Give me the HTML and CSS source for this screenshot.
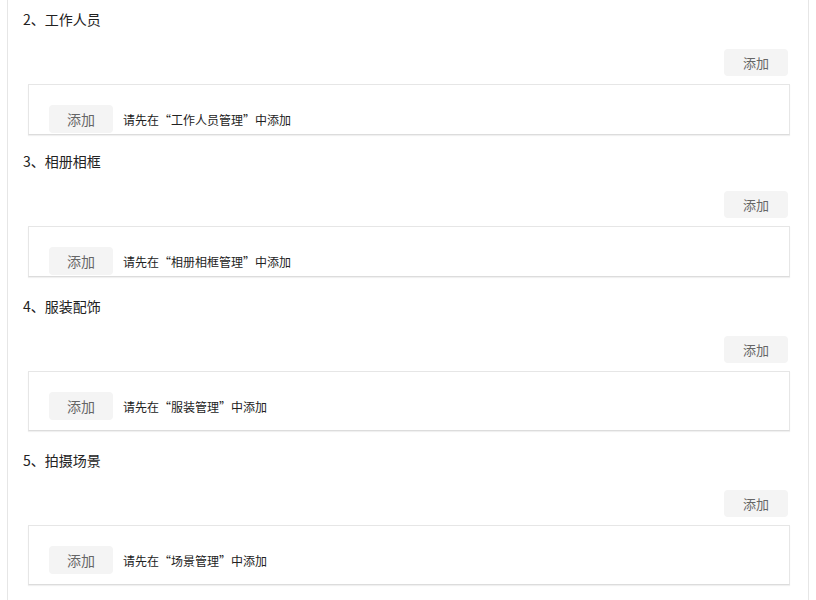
FILE: index.html
```html
<!DOCTYPE html>
<html>
<head>
    <title>资源配置</title>
<link rel="stylesheet" href="styles.css">
</head>
<body>
    <div class="panel">
        <div class="section">
            <div class="section-title">2、工作人员</div>
            <div class="section-bar"><button class="btn btn-small">添加</button></div>
            <div class="section-box">
                <button class="btn">添加</button>
                <span class="hint">请先在“工作人员管理”中添加</span>
            </div>
        </div>

        <div class="section">
            <div class="section-title">3、相册相框</div>
            <div class="section-bar"><button class="btn btn-small">添加</button></div>
            <div class="section-box">
                <button class="btn">添加</button>
                <span class="hint">请先在“相册相框管理”中添加</span>
            </div>
        </div>

        <div class="section section-loose">
            <div class="section-title">4、服装配饰</div>
            <div class="section-bar"><button class="btn btn-small">添加</button></div>
            <div class="section-box section-box-tall">
                <button class="btn">添加</button>
                <span class="hint">请先在“服装管理”中添加</span>
            </div>
        </div>

        <div class="section section-loose">
            <div class="section-title">5、拍摄场景</div>
            <div class="section-bar"><button class="btn btn-small">添加</button></div>
            <div class="section-box section-box-tall">
                <button class="btn">添加</button>
                <span class="hint">请先在“场景管理”中添加</span>
            </div>
        </div>
    </div>
</body>
</html>
```

FILE: styles.css
```css
body {
    margin: 0;
    background-color: #fff;
    font-family: "Noto Sans CJK SC", "Noto Sans", sans-serif;
    color: #333;
}

.panel {
    width: 800px;
    min-height: 600px;
    margin-left: 7px;
    border-left: 1px solid #e6e6e6;
    border-right: 1px solid #e6e6e6;
}

.section {
    padding-top: 16px;
}

.section:first-child {
    padding-top: 9px;
}

.section-loose {
    padding-top: 19px;
}

.section-title {
    padding-left: 15px;
    font-size: 14px;
    line-height: 20px;
    color: #222;
}

.section-bar {
    display: flex;
    justify-content: flex-end;
    padding: 20px 20px 0 0;
}

.btn {
    width: 64px;
    height: 28px;
    padding: 0;
    border: none;
    border-radius: 4px;
    background-color: #f4f4f4;
    color: #666;
    font-family: inherit;
    font-size: 14px;
    line-height: 28px;
}

.btn-small {
    height: 27px;
    font-size: 13px;
    line-height: 27px;
}

.section-box {
    display: flex;
    align-items: center;
    gap: 10px;
    margin: 8px 18px 0 20px;
    padding: 20px 20px 1px 20px;
    border: 1px solid #e6e6e6;
    border-bottom-color: #dcdcdc;
    box-shadow: 0 1px 1px rgba(0, 0, 0, 0.06);
    background-color: #fff;
}

.section-box-tall {
    padding-bottom: 10px;
}

.hint {
    font-size: 12px;
    color: #222;
}
```
